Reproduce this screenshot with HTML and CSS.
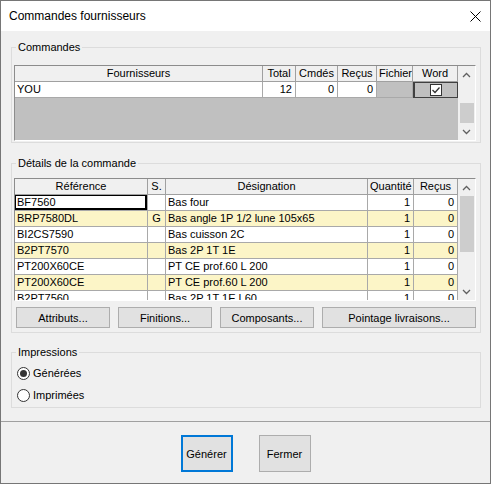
FILE: index.html
```html
<!DOCTYPE html>
<html lang="fr">
<head>
  <meta charset="UTF-8">
  <title>Commandes fournisseurs</title>
  <link rel="stylesheet" href="styles.css">
</head>
<body>
<div class="window">
  <div class="titlebar">
    <span class="title">Commandes fournisseurs</span>
    <svg class="close" width="11" height="11" viewBox="0 0 11 11">
      <path d="M0.5 0.5 L10.5 10.5 M10.5 0.5 L0.5 10.5" stroke="#000" stroke-width="1" fill="none"/>
    </svg>
  </div>

  <div class="main">
    <fieldset class="group">
      <legend>Commandes</legend>
      <div class="group-body body-cmd">
        <div class="grid grid-cmd">
          <div class="grid-cells">
            <div class="row head">
              <div class="c">Fournisseurs</div>
              <div class="c">Total</div>
              <div class="c">Cmdés</div>
              <div class="c">Reçus</div>
              <div class="c">Fichier</div>
              <div class="c">Word</div>
            </div>
            <div class="row">
              <div class="c">YOU</div>
              <div class="c num">12</div>
              <div class="c num">0</div>
              <div class="c num">0</div>
              <div class="c off"></div>
              <div class="c word"><span class="check">
                <svg width="10" height="10" viewBox="0 0 10 10"><path d="M1.5 5 L4 7.5 L8.5 2.5" stroke="#333" stroke-width="1.3" fill="none"/></svg>
              </span></div>
            </div>
            <div class="grid-empty"></div>
          </div>
          <div class="vscroll">
            <div class="sb-btn"><svg width="9" height="6" viewBox="0 0 9 6"><polyline points="1,5 4.5,1.5 8,5" stroke="#606060" stroke-width="1.3" fill="none"/></svg></div>
            <div class="sb-thumb thumb-cmd"></div>
            <div class="sb-gap"></div>
            <div class="sb-btn"><svg width="9" height="6" viewBox="0 0 9 6"><polyline points="1,1 4.5,4.5 8,1" stroke="#606060" stroke-width="1.3" fill="none"/></svg></div>
          </div>
        </div>
      </div>
    </fieldset>

    <fieldset class="group group-det">
      <legend>Détails de la commande</legend>
      <div class="group-body body-det">
        <div class="grid grid-det">
          <div class="grid-cells">
            <div class="row head">
              <div class="c">Référence</div>
              <div class="c">S.</div>
              <div class="c">Désignation</div>
              <div class="c">Quantité</div>
              <div class="c">Reçus</div>
            </div>
            <div class="row">
              <div class="c focus">BF7560</div>
              <div class="c mid"></div>
              <div class="c">Bas four</div>
              <div class="c num">1</div>
              <div class="c num">0</div>
            </div>
            <div class="row alt">
              <div class="c">BRP7580DL</div>
              <div class="c mid">G</div>
              <div class="c">Bas angle 1P 1/2 lune 105x65</div>
              <div class="c num">1</div>
              <div class="c num">0</div>
            </div>
            <div class="row">
              <div class="c">BI2CS7590</div>
              <div class="c mid"></div>
              <div class="c">Bas cuisson 2C</div>
              <div class="c num">1</div>
              <div class="c num">0</div>
            </div>
            <div class="row alt">
              <div class="c">B2PT7570</div>
              <div class="c mid"></div>
              <div class="c">Bas 2P 1T 1E</div>
              <div class="c num">1</div>
              <div class="c num">0</div>
            </div>
            <div class="row">
              <div class="c">PT200X60CE</div>
              <div class="c mid"></div>
              <div class="c">PT CE prof.60 L 200</div>
              <div class="c num">1</div>
              <div class="c num">0</div>
            </div>
            <div class="row alt">
              <div class="c">PT200X60CE</div>
              <div class="c mid"></div>
              <div class="c">PT CE prof.60 L 200</div>
              <div class="c num">1</div>
              <div class="c num">0</div>
            </div>
            <div class="row">
              <div class="c">B2PT7560</div>
              <div class="c mid"></div>
              <div class="c">Bas 2P 1T 1E L60</div>
              <div class="c num">1</div>
              <div class="c num">0</div>
            </div>
          </div>
          <div class="vscroll">
            <div class="sb-btn"><svg width="9" height="6" viewBox="0 0 9 6"><polyline points="1,5 4.5,1.5 8,5" stroke="#606060" stroke-width="1.3" fill="none"/></svg></div>
            <div class="sb-thumb thumb-det"></div>
            <div class="sb-gap"></div>
            <div class="sb-btn"><svg width="9" height="6" viewBox="0 0 9 6"><polyline points="1,1 4.5,4.5 8,1" stroke="#606060" stroke-width="1.3" fill="none"/></svg></div>
          </div>
        </div>

        <div class="actions">
          <button class="btn">Attributs...</button>
          <button class="btn">Finitions...</button>
          <button class="btn">Composants...</button>
          <button class="btn wide">Pointage livraisons...</button>
        </div>
      </div>
    </fieldset>

    <fieldset class="group group-imp">
      <legend>Impressions</legend>
      <div class="group-body body-imp">
        <label class="radio"><span class="radio-dot checked"></span>Générées</label>
        <label class="radio"><span class="radio-dot"></span>Imprimées</label>
      </div>
    </fieldset>
  </div>

  <div class="sep"></div>

  <div class="footer">
    <button class="btn big default">Générer</button>
    <button class="btn big">Fermer</button>
  </div>
</div>
</body>
</html>
```

FILE: styles.css
```css
* {
  box-sizing: border-box;
}

body {
  margin: 0;
  font-family: "Liberation Sans", Arial, sans-serif;
  font-size: 11px;
  color: #000;
  background: #f0f0f0;
}

.window {
  width: 491px;
  height: 484px;
  border: 1px solid #767676;
  background: #f0f0f0;
}

.titlebar {
  height: 30px;
  background: #fff;
  display: flex;
  align-items: center;
  padding-left: 8px;
}

.title {
  font-size: 12px;
}

.close {
  margin-left: auto;
  margin-right: 9px;
}

.main {
  padding: 0 9px 0 10px;
}

/* group boxes */
.group {
  margin: 13px 0 0 0;
  padding: 0;
  border: 1px solid #dcdcdc;
  min-width: 0;
}

.group:first-child {
  margin-top: 10px;
}

.group-det {
  margin-top: 14px;
}

.group legend {
  margin-left: 4px;
  padding: 0 2px;
  line-height: 13px;
  font-size: 11px;
}

.body-cmd {
  padding: 11px 0 1px 2px;
}

.body-det {
  padding: 8px 0 4px 2px;
}

.body-imp {
  padding: 3px 0 1px 5px;
}

/* grids */
.grid {
  display: flex;
  width: 462px;
  border: 1px solid;
  border-color: #8c8c8c #fff #fff #8c8c8c;
  background: #c0c0c0;
}

.grid-cmd {
  height: 76px;
}

.grid-det {
  height: 123px;
}

.grid-cells {
  width: 443px;
  overflow: hidden;
}

.row {
  display: grid;
  height: 16px;
  background: #fff;
}

.grid-cmd .row {
  grid-template-columns: 248px 33px 42px 39px 36px 45px;
}

.grid-det .row {
  grid-template-columns: 133px 18px 202px 46px 44px;
}

.row.head {
  background: #f0f0f0;
}

.row.alt {
  background: #fcf5c7;
}

.c {
  border-right: 1px solid #a9a9a9;
  border-bottom: 1px solid #a9a9a9;
  line-height: 15px;
  padding: 0 2px;
  white-space: nowrap;
  overflow: hidden;
}

.head .c {
  text-align: center;
  border-color: #a0a0a0;
}

.c.num {
  text-align: right;
  padding-right: 3px;
}

.c.mid {
  text-align: center;
}

.c.off {
  background: #c0c0c0;
}

.c.focus {
  box-shadow: inset 1px 1px 0 #000, inset -2px -2px 0 #000;
}

.c.word {
  background: #c0c0c0;
  border: 1px solid #404040;
  border-left-width: 2px;
  display: flex;
  justify-content: center;
  align-items: center;
}

.check {
  width: 12px;
  height: 12px;
  background: #fff;
  border: 1px solid #333;
  display: flex;
  align-items: center;
  justify-content: center;
}

.grid-empty {
  height: 42px;
  background: #c0c0c0;
}

/* scrollbars */
.vscroll {
  width: 17px;
  display: flex;
  flex-direction: column;
  background: #f0f0f0;
}

.sb-btn {
  height: 17px;
  display: flex;
  align-items: center;
  justify-content: center;
  flex-shrink: 0;
}

.sb-gap {
  flex: 1;
}

.sb-thumb {
  background: #cdcdcd;
  margin: 0 1px 0 2px;
  flex-shrink: 0;
}

.thumb-cmd {
  margin-top: 20px;
  height: 20px;
}

.thumb-det {
  height: 56px;
}

/* buttons */
.btn {
  font-family: "Liberation Sans", Arial, sans-serif;
  font-size: 11px;
  color: #000;
  background: #e1e1e1;
  border: 1px solid #adadad;
  height: 21px;
  width: 94px;
  padding: 0;
}

.btn.wide {
  width: 154px;
}

.actions {
  display: flex;
  gap: 8px;
  margin: 6px 0 0 2px;
}

/* radios */
.radio {
  display: flex;
  align-items: center;
  height: 22px;
  gap: 3px;
}

.radio-dot {
  width: 13px;
  height: 13px;
  border: 1px solid #333;
  border-radius: 50%;
  background: #fff;
  display: flex;
  align-items: center;
  justify-content: center;
}

.radio-dot.checked::after {
  content: "";
  width: 7px;
  height: 7px;
  border-radius: 50%;
  background: #333;
}

.sep {
  margin-top: 13px;
  height: 1px;
  background: #a0a0a0;
}

.footer {
  display: flex;
  justify-content: center;
  gap: 26px;
  margin-top: 13px;
}

.btn.big {
  width: 52px;
  height: 37px;
}

.btn.default {
  border: 2px solid #0078d7;
}
```
